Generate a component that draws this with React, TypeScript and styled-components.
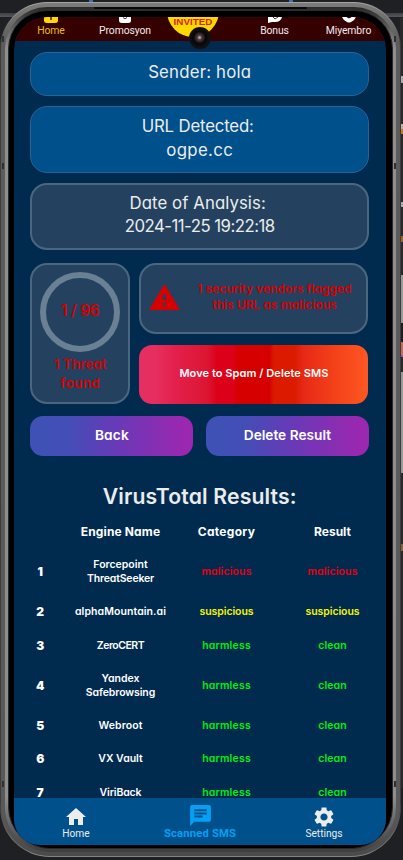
import React from "react";
import styled, { createGlobalStyle } from "styled-components";

const Global = createGlobalStyle`
  * { box-sizing: border-box; }
  body { margin: 0; background: #1f2024; overflow: hidden; }
`;

const Desk = styled.div`
  width: 403px;
  height: 860px;
  overflow: hidden;
  position: relative;
  padding: 2px 2px 3px 0;
  background:
    linear-gradient(90deg, transparent 0 3px, #3f6fb5 3px 7px, transparent 7px) 86px 0 / 200px 2px repeat-x,
    linear-gradient(#3c3f44, #55585e) 0 13px / 100% 4px no-repeat,
    linear-gradient(#1f2024, #1f2024);
`;

const EditorEdge = styled.div`
  position: absolute;
  right: 0;
  top: 18px;
  width: 3px;
  height: 770px;
  background: linear-gradient(
    #29292b 0 58px, #aaa 58px 65px, #29292b 65px 106px, #b9b1a5 106px 111px, #b77b3d 111px 116px,
    #29292b 116px 184px, #aaa 184px 189px, #29292b 189px 218px, #93622f 218px 224px, #29292b 224px 257px,
    #999 257px 305px, #1b1d20 305px 324px, #c26b5e 324px 337px, #a64fae 337px 339px, #29292b 339px 354px,
    #999 354px 455px, #29292b 455px 526px, #80633e 526px 533px, #29292b 533px
  );
`;

const Shell = styled.div`
  position: relative;
  width: 401px;
  height: 855px;
  padding: 1px;
  border-radius: 47px 47px 50px 50px;
  background: linear-gradient(#a5a5a2, #3c3c3c 45px, #3c3c3c 800px, #85857f);
`;

const Metal = styled.div`
  height: 100%;
  padding: 4px;
  border-radius: 46px 46px 49px 49px;
  background: linear-gradient(#7c7c7a, #5c5c5c 40px, #595959 810px, #4a4a4a);
`;

const Rim = styled.div`
  height: 100%;
  padding: 3px;
  border-radius: 42px 42px 45px 45px;
  background: linear-gradient(#2a2a2a, #8f8f8f 40px, #8d8d8d 790px, #3d3d3d);
`;

const Bezel = styled.div`
  height: 100%;
  padding: 6px 6px 3px 5px;
  border: 1px solid #2b2b2b;
  border-radius: 39px 39px 42px 42px;
  background: #000;
`;

const SideMark = styled.i<{ $top: number; $right?: boolean }>`
  position: absolute;
  top: ${(p) => p.$top}px;
  ${(p) => (p.$right ? "right: 5px;" : "left: 2px;")}
  width: 2px;
  height: 6px;
  background: #2f2f2f;
`;

const Speaker = styled.i`
  position: absolute;
  top: 5px;
  left: 94px;
  width: 213px;
  height: 2px;
  border-radius: 1px;
  background: #080808;
`;

const Screen = styled.div`
  width: 372px;
  height: 828px;
  display: flex;
  flex-direction: column;
  overflow: hidden;
  border-radius: 33px 33px 26px 26px;
  background: #002b4f;
  font-family: Inter, "Liberation Sans", sans-serif;
  font-feature-settings: "cv11";
  color: #ececec;
`;

const AdStrip = styled.div`
  position: relative;
  flex: none;
  height: 24px;
  overflow: hidden;
  background: #350000;
  font: 10.4px/14px Roboto, sans-serif;
  letter-spacing: -0.1px;
  display: grid;
  grid-template-columns: 74px 74px 76px 73px 75px;
  text-align: center;
`;

const AdItem = styled.div<{ $gold?: boolean }>`
  display: flex;
  flex-direction: column;
  align-items: center;
  color: ${(p) => (p.$gold ? "#e5bd08" : "#f1eaea")};
  svg { display: block; flex: none; }
`;

const Invited = styled.div`
  width: 52px;
  height: 52px;
  margin: -32px 0 0 5px;
  padding-top: 32px;
  border-radius: 50%;
  background: #ffd800;
  color: #d8231b;
  font: bold 9.9px/10px "Liberation Sans", sans-serif;
`;

const Camera = styled.div`
  position: absolute;
  left: 189px;
  top: 25px;
  width: 22px;
  height: 22px;
  border-radius: 50%;
  background: radial-gradient(circle at 48% 48%, #a99 0 1px, #553f43 2px, #30262b 4px, #070707 6px, #111 10px);
`;

const Content = styled.main`
  flex: 1;
  min-height: 0;
  overflow: hidden;
  padding: 11px 17px 0 16.4px;
  display: flex;
  flex-direction: column;
`;

const Text = styled.span<{ $s?: number; $trail?: number }>`
  display: block;
  white-space: nowrap;
  text-align: center;
  letter-spacing: ${(p) => p.$s ?? 0}px;
  padding-right: ${(p) => p.$trail ?? 0}px;
`;

const Card = styled.section<{ $h: number; $gap: number; $muted?: boolean; $drop?: number }>`
  flex: none;
  height: ${(p) => p.$h}px;
  margin-bottom: ${(p) => p.$gap}px;
  padding-bottom: ${(p) => p.$drop ?? 0}px;
  display: flex;
  flex-direction: column;
  align-items: center;
  justify-content: center;
  border: ${(p) => (p.$muted ? "2px solid #4b6780" : "1px solid #286296")};
  border-radius: 17px;
  background: ${(p) => (p.$muted ? "#244260" : "#00508b")};
  font-size: 16.8px;
  line-height: 23.5px;
`;

const Summary = styled.div`
  flex: none;
  display: grid;
  grid-template-columns: 99.5px 229px;
  column-gap: 9.5px;
  height: 141px;
  margin-bottom: 12.5px;
  color: #d40000;
  font-weight: 600;
`;

const Score = styled.section`
  display: flex;
  flex-direction: column;
  align-items: center;
  padding-top: 7.5px;
  border: 2px solid #4b6780;
  border-radius: 17px;
  background: #244260;
  font-size: 13.5px;
  line-height: 18.5px;
`;

const Ring = styled.div`
  width: 80px;
  height: 80px;
  margin-bottom: 3px;
  display: flex;
  align-items: center;
  justify-content: center;
  border: 6.5px solid #6a8093;
  border-radius: 50%;
  font-size: 15.5px;
  padding-bottom: 2px;
`;

const SummarySide = styled.div`
  display: flex;
  flex-direction: column;
  justify-content: space-between;
`;

const Warning = styled.section`
  height: 71.5px;
  display: grid;
  grid-template-columns: 32px 1fr;
  column-gap: 9px;
  padding: 0 7.5px 2px;
  align-items: center;
  justify-items: center;
  border: 2px solid #4b6780;
  border-radius: 17px;
  background: #244260;
  font-size: 12px;
  line-height: 16px;
  svg { display: block; }
`;

const SpamButton = styled.button`
  height: 59px;
  padding: 0 0 2px;
  display: flex;
  align-items: center;
  justify-content: center;
  border: 0;
  border-radius: 13px;
  background: linear-gradient(90deg, #e72e60 0 7%, #e3204c 16%, #dc1530 30%, #dc0018 34% 41%, #d60000 43% 57%, #dc1a00 59% 68%, #e72917 72%, #f34019 85%, #ff5722);
  color: #fff;
  font: 600 11px/16px Inter, sans-serif;
  font-feature-settings: "cv11";
`;

const Actions = styled.div`
  flex: none;
  display: grid;
  grid-template-columns: 163px 163px;
  column-gap: 12.5px;
`;

const ActionButton = styled.button`
  height: 40px;
  padding: 0 0 2px;
  display: flex;
  align-items: center;
  justify-content: center;
  border: 0;
  border-radius: 13px;
  background: linear-gradient(90deg, #3f51b5 0 8%, #454db7 25%, #673ab7 52%, #9c27b0 95%);
  color: #fff;
  font: 600 13.7px/20px Inter, sans-serif;
  font-feature-settings: "cv11";
`;

const Heading = styled.h2`
  flex: none;
  display: flex;
  justify-content: center;
  margin: 28px 0 7.4px;
  font-size: 21.2px;
  line-height: 24px;
  font-weight: 600;
  color: #ececec;
`;

const TableRow = styled.div<{ $h?: number; $head?: boolean }>`
  flex: none;
  height: ${(p) => p.$h ?? 33.5}px;
  display: grid;
  grid-template-columns: 19.6px 141px 71px 141px;
  margin-right: -20px;
  align-items: center;
  justify-items: center;
  text-align: center;
  color: #fff;
  font-size: ${(p) => (p.$head ? 12 : 10.5)}px;
  font-weight: ${(p) => (p.$head ? 700 : 600)};
  line-height: 14px;
`;

const Rank = styled.b`
  font-size: 12px;
`;

type Tone = "bad" | "warn" | "good";
const tones: Record<Tone, string> = { bad: "#e60010", warn: "#f4f40c", good: "#00ee0f" };

const Verdict = styled.div<{ $tone: Tone }>`
  color: ${(p) => tones[p.$tone]};
`;

const BottomNav = styled.nav`
  flex: none;
  height: 47px;
  display: grid;
  grid-template-columns: repeat(3, 124px);
  background: #00508b;
  font-family: Roboto, sans-serif;
`;

const NavItem = styled.div<{ $active?: boolean }>`
  display: flex;
  flex-direction: column;
  align-items: center;
  padding-top: ${(p) => (p.$active ? 4.5 : 6.5)}px;
  color: ${(p) => (p.$active ? "#03a0f3" : "#ececec")};
  font-size: ${(p) => (p.$active ? 11.2 : 10.2)}px;
  font-weight: ${(p) => (p.$active ? 700 : 400)};
  line-height: ${(p) => (p.$active ? 12 : 10)}px;
  svg { display: block; flex: none; fill: currentColor; }
`;

type Engine = { names: [string, number][]; tone: Tone };
const engines: Engine[] = [
  { names: [["Forcepoint", 0], ["ThreatSeeker", -0.16]], tone: "bad" },
  { names: [["alphaMountain.ai", 0.08]], tone: "warn" },
  { names: [["ZeroCERT", -0.5]], tone: "good" },
  { names: [["Yandex", 0], ["Safebrowsing", -0.09]], tone: "good" },
  { names: [["Webroot", 0.1]], tone: "good" },
  { names: [["VX Vault", 0]], tone: "good" },
  { names: [["ViriBack", -0.14]], tone: "good" },
];
const verdicts: Record<Tone, [string, number][]> = {
  bad: [["malicious", 0.13], ["malicious", 0.13]],
  warn: [["suspicious", -0.08], ["suspicious", -0.08]],
  good: [["harmless", 0.19], ["clean", 0.09]],
};

export default function App() {
  return (
    <Desk>
      <Global />
      <EditorEdge />
      <Shell>
        <Metal>
          <Rim>
            <Bezel>
              <Screen>
                <AdStrip>
                  <AdItem $gold>
                    <svg width="14" height="7" viewBox="0 0 14 7"><path d="M0 0H14V3.500Q14 6 11 6H3Q0 6 0 3.500Z" fill="#ffd800" /><path d="M7 0V3" stroke="#7b5100" strokeWidth="2" /></svg>
                    Home
                  </AdItem>
                  <AdItem>
                    <svg width="12" height="7" viewBox="0 0 12 7"><path d="M0 0H12V3.500Q12 6 9 6H3Q0 6 0 3.500Z" fill="#fff" /><path d="M4 0.500Q6 3 8 0.500" fill="none" stroke="#623" strokeWidth="1" /></svg>
                    Promosyon
                  </AdItem>
                  <Invited><Text>INVITED</Text></Invited>
                  <AdItem>
                    <svg width="14" height="7" viewBox="0 0 14 7"><path d="M0 0H14Q13 5 7 5H4L0 6Z" fill="#fff" /><path d="M5 0L7 2L10 0" fill="none" stroke="#532" strokeWidth="1" /></svg>
                    Bonus
                  </AdItem>
                  <AdItem>
                    <svg width="14" height="7" viewBox="0 0 14 7"><path d="M0 0H14Q13 3 9 5Q7 6 5 5Q1 3 0 0Z" fill="#fff" /><path d="M4.500 0Q7 2.500 9.500 0" fill="#350000" /></svg>
                    Miyembro
                  </AdItem>
                </AdStrip>
                <Content>
                  <Card $h={43.5} $gap={10.5} $drop={3}><Text $s={0.2}>Sender: hola</Text></Card>
                  <Card $h={66.5} $gap={10.5} $drop={1.5}>
                    <Text $s={-0.17} $trail={4}>URL Detected:</Text>
                    <Text $s={0.35}>ogpe.cc</Text>
                  </Card>
                  <Card $h={67} $gap={12.5} $muted $drop={2.5}>
                    <Text $s={0.06} $trail={4}>Date of Analysis:</Text>
                    <Text $s={-0.52}>2024-11-25 19:22:18</Text>
                  </Card>
                  <Summary>
                    <Score>
                      <Ring><Text $s={-0.2}>1 / 96</Text></Ring>
                      <Text>1 Threat</Text>
                      <Text $s={0.35}>found</Text>
                    </Score>
                    <SummarySide>
                      <Warning>
                        <svg width="31" height="26" viewBox="0 0 31 26"><path fillRule="evenodd" d="M15.500 0L31 26H0ZM14 10.500V16H17V10.500ZM14 18.800V21.600H17V18.800Z" fill="#d60000" /></svg>
                        <div>
                          <Text>1 security vendors flagged</Text>
                          <Text $s={0.03}>this URL as malicious</Text>
                        </div>
                      </Warning>
                      <SpamButton><Text $s={0.07}>Move to Spam / Delete SMS</Text></SpamButton>
                    </SummarySide>
                  </Summary>
                  <Actions>
                    <ActionButton><Text $s={0.15}>Back</Text></ActionButton>
                    <ActionButton><Text>Delete Result</Text></ActionButton>
                  </Actions>
                  <Heading><Text $s={0.15}>VirusTotal Results:</Text></Heading>
                  <TableRow $head>
                    <span />
                    <Text $s={0.15}>Engine Name</Text>
                    <Text $s={0.3}>Category</Text>
                    <Text>Result</Text>
                  </TableRow>
                  {engines.map((e, i) => (
                    <TableRow key={i} $h={e.names.length > 1 ? 46.5 : 33.5}>
                      <Rank>{i + 1}</Rank>
                      <div>{e.names.map(([n, s]) => <Text key={n} $s={s}>{n}</Text>)}</div>
                      {verdicts[e.tone].map(([n, s], k) => (
                        <Verdict key={k} $tone={e.tone}><Text $s={s}>{n}</Text></Verdict>
                      ))}
                    </TableRow>
                  ))}
                </Content>
                <BottomNav>
                  <NavItem>
                    <svg width="24" height="24" viewBox="0 0 24 24"><path d="M10 20v-6h4v6h5v-8h3L12 3 2 12h3v8z" /></svg>
                    <Text>Home</Text>
                  </NavItem>
                  <NavItem $active>
                    <svg width="25" height="25" viewBox="0 0 24 24"><path d="M20 2H4c-1.100 0-1.990.9-1.990 2L2 22l4-4h14c1.100 0 2-.9 2-2V4c0-1.100-.9-2-2-2zM6 9h12v2H6V9zm8 5H6v-2h8v2zm4-6H6V6h12v2z" /></svg>
                    <Text $s={0.2}>Scanned SMS</Text>
                  </NavItem>
                  <NavItem>
                    <svg width="24" height="24" viewBox="0 0 24 24"><path d="M19.140 12.940c.04-.3.060-.61.060-.94 0-.32-.020-.64-.070-.94l2.030-1.580c.18-.14.23-.41.12-.61l-1.920-3.320c-.12-.22-.37-.29-.59-.22l-2.390.96c-.5-.38-1.030-.7-1.620-.94l-.36-2.540c-.04-.24-.24-.41-.48-.41h-3.840c-.24 0-.43.17-.47.41l-.36 2.540c-.59.24-1.130.57-1.620.94l-2.390-.96c-.22-.08-.47 0-.59.22L2.740 8.870c-.12.21-.08.47.12.61l2.030 1.580c-.05.3-.09.63-.09.940s.02.64.07.940l-2.030 1.580c-.18.14-.23.41-.12.61l1.920 3.320c.12.22.37.29.59.22l2.390-.96c.5.38 1.030.7 1.620.940l.36 2.540c.05.24.24.41.48.41h3.840c.24 0 .44-.17.47-.41l.36-2.540c.59-.24 1.130-.56 1.620-.940l2.390.96c.22.08.47 0 .59-.22l1.920-3.320c.12-.22.07-.47-.12-.61l-2.010-1.580zM12 15.600c-1.980 0-3.600-1.620-3.600-3.600s1.620-3.600 3.600-3.600 3.600 1.620 3.600 3.600-1.620 3.600-3.600 3.600z" /></svg>
                    <Text>Settings</Text>
                  </NavItem>
                </BottomNav>
              </Screen>
            </Bezel>
          </Rim>
        </Metal>
        <Speaker />
        {[34, 161, 779].map((t) => (
          <React.Fragment key={t}>
            <SideMark $top={t} />
            <SideMark $top={t} $right />
          </React.Fragment>
        ))}
        <Camera />
      </Shell>
    </Desk>
  );
}
